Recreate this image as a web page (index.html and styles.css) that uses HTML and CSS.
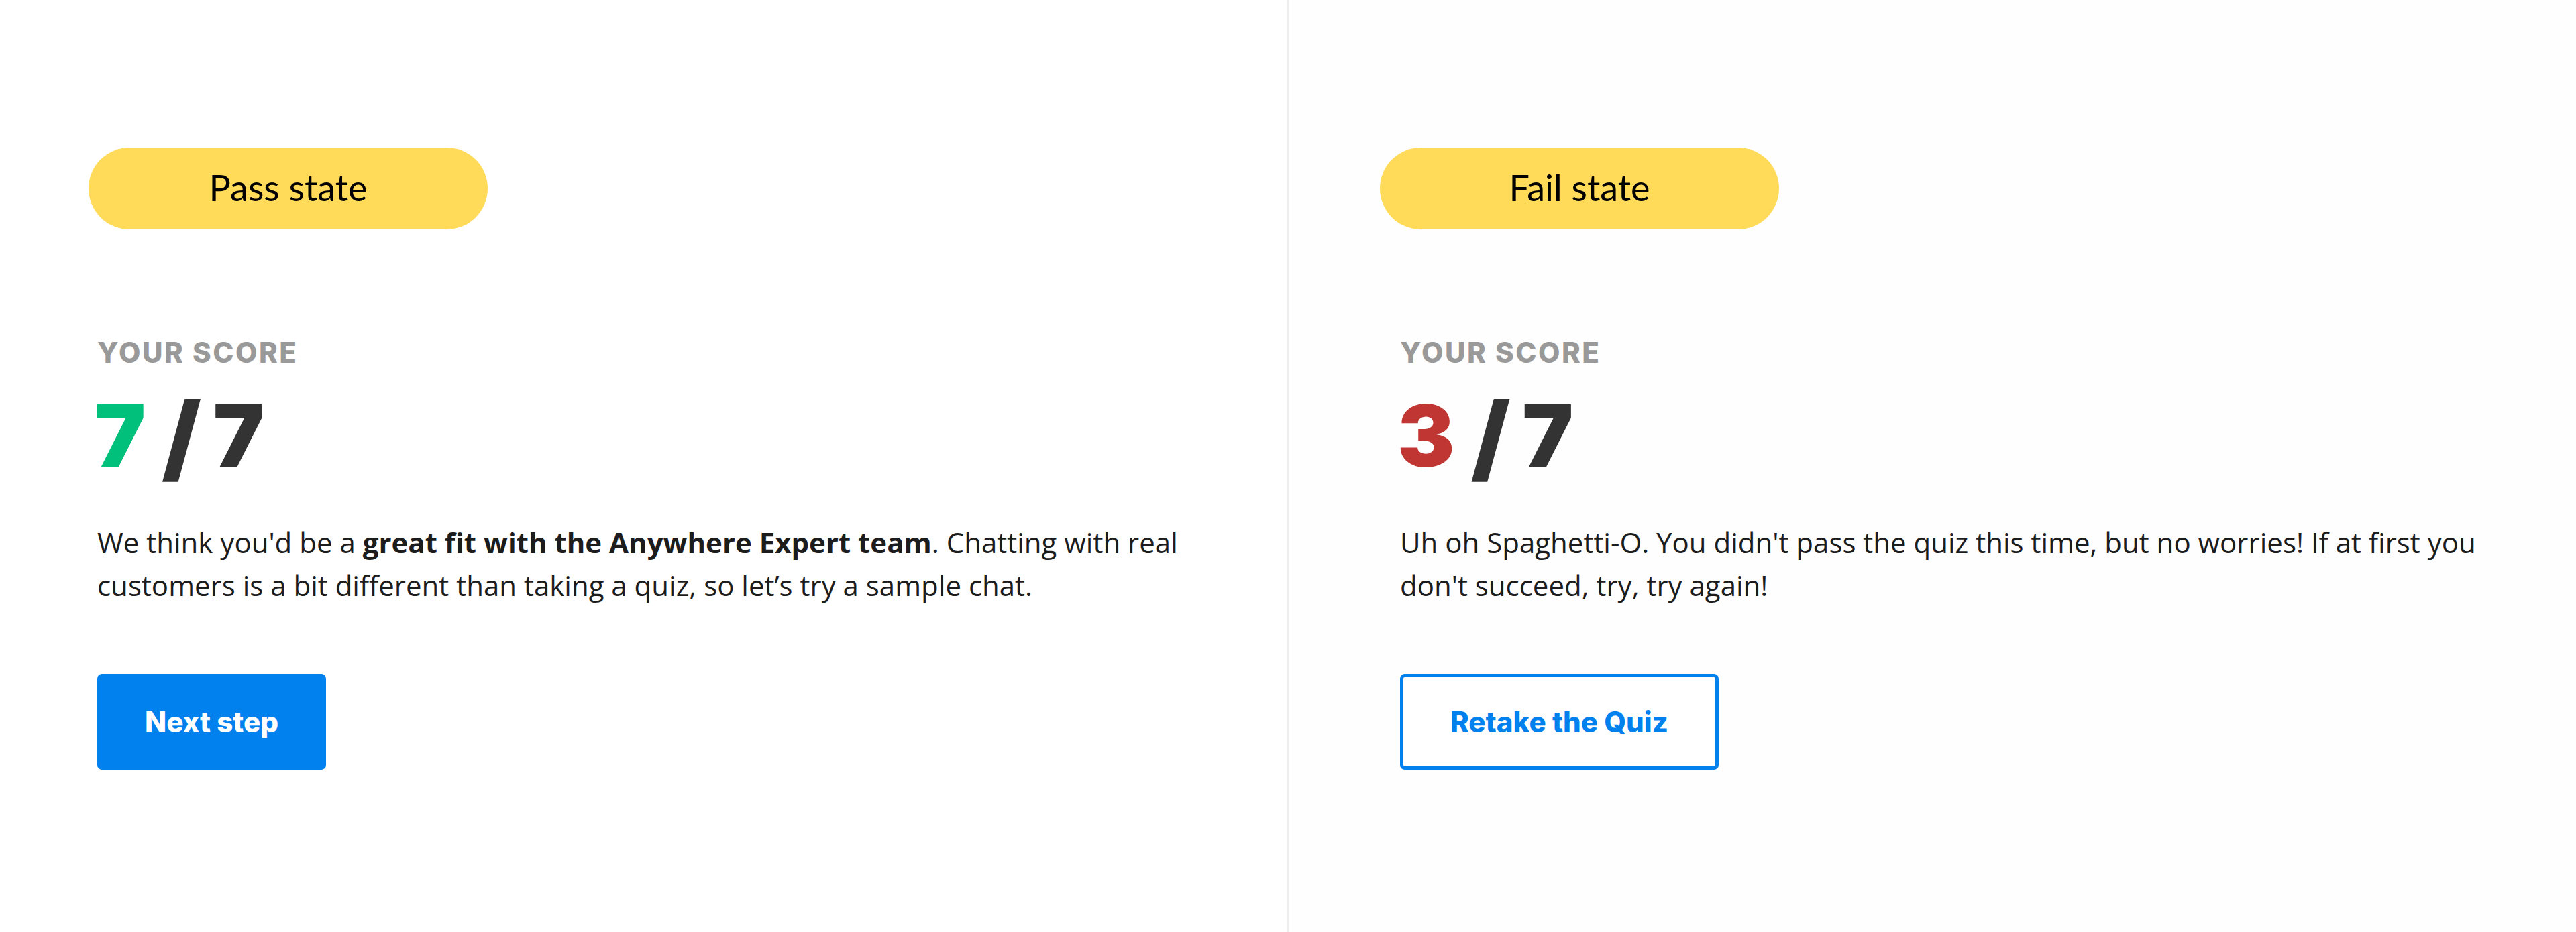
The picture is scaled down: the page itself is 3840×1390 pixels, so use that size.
FILE: index.html
```html
<!DOCTYPE html>
<html lang="en">
<head>
<meta charset="utf-8">
<title>Quiz results</title>
<link rel="stylesheet" href="styles.css">
</head>
<body>
<main class="board">
  <section class="panel panel-pass">
    <div class="pill pill-pass">Pass state</div>
    <div class="label">YOUR SCORE</div>
    <div class="score"><span class="got got-pass">7</span><span class="slash">/</span><span class="total">7</span></div>
    <p class="message">We think you'd be a <strong>great fit with the Anywhere Expert team</strong>. Chatting with real customers is a bit different than taking a quiz, so let’s try a sample chat.</p>
    <a class="btn btn-solid">Next step</a>
  </section>
  <section class="panel panel-fail">
    <div class="pill pill-fail">Fail state</div>
    <div class="label">YOUR SCORE</div>
    <div class="score"><span class="got got-fail">3</span><span class="slash">/</span><span class="total">7</span></div>
    <p class="message">Uh oh Spaghetti-O. You didn't pass the quiz this time, but no worries! If at first you don't succeed, try, try again!</p>
    <a class="btn btn-outline">Retake the Quiz</a>
  </section>
</main>
</body>
</html>
```
FILE: styles.css
```css
* { box-sizing: border-box; }
html, body { margin: 0; padding: 0; }
body {
  width: 3840px;
  height: 1390px;
  background: #ffffff;
  font-family: "Open Sans", "Liberation Sans", sans-serif;
  overflow: hidden;
}
.board {
  display: flex;
  height: 1390px;
}
.panel {
  display: flex;
  flex-direction: column;
  align-items: flex-start;
  padding-top: 220px;
}
.panel-pass {
  flex: 0 0 1918px;
  padding-left: 145px;
  background: #ffffff;
}
.panel-fail {
  flex: 1 1 auto;
  padding-left: 165px;
  border-left: 4px solid #eeeeee;
  background: #fefefe;
}
.pill {
  width: 595px;
  height: 122px;
  border-radius: 61px;
  background: #ffdb59;
  color: #000;
  font-family: Lato, "Open Sans", sans-serif;
  font-size: 54px;
  display: flex;
  align-items: center;
  justify-content: center;
  padding-bottom: 4px;
}
.pill-pass { margin-left: -13px; }
.pill-fail { margin-left: -30px; }
.label {
  margin-top: 163px;
  font-family: Inter, "Liberation Sans", sans-serif;
  font-weight: 800;
  font-size: 42px;
  line-height: 1;
  letter-spacing: 2.5px;
  color: #999999;
}
.score {
  margin-top: 26px;
  font-family: Inter, "Liberation Sans", sans-serif;
  font-weight: 900;
  font-size: 128px;
  line-height: 1;
  color: #333333;
  display: flex;
  align-items: baseline;
  margin-left: -4px;
}
.got-pass { color: #00c07b; }
.got-fail { color: #c03633; }
.slash {
  margin: 0 18px 0 24px;
  font-size: 142px;
  transform: translateY(7px);
}
.message {
  margin: 62px 0 0 0;
  max-width: 1680px;
  font-size: 42px;
  line-height: 64px;
  color: #1c1c1c;
}
.message strong { font-weight: 700; }
.btn {
  margin-top: 100px;
  height: 143px;
  display: flex;
  align-items: center;
  justify-content: center;
  border-radius: 7px;
  font-family: Inter, "Liberation Sans", sans-serif;
  font-weight: 800;
  font-size: 42px;
  text-decoration: none;
}
.btn-solid {
  width: 341px;
  background: #0181ee;
  color: #ffffff;
}
.btn-outline {
  width: 475px;
  background: #ffffff;
  border: 5px solid #0181ee;
  color: #0181ee;
}
```
